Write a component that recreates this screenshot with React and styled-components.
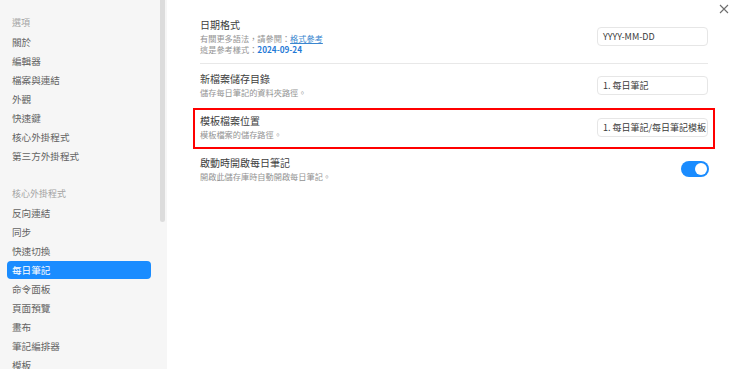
import React from "react";
import styled, { createGlobalStyle } from "styled-components";

const Global = createGlobalStyle`
  html, body { margin: 0; padding: 0; background: #fff; }
  body { font-family: "Noto Sans CJK TC", "Noto Sans", "Liberation Sans", sans-serif; }
  #root { height: 100vh; }
`;

const Shell = styled.div`
  display: flex;
  height: 100vh;
  overflow: hidden;
  position: relative;
`;

const Sidebar = styled.nav`
  position: relative;
  flex: 0 0 167px;
  background: #f6f6f6;
  padding: 12px 16px 0 7px;
  box-sizing: border-box;
  overflow: hidden;
`;

const Scrollbar = styled.div`
  position: absolute;
  left: 160px;
  top: 0;
  width: 5px;
  height: 222px;
  background: #dcdcdc;
  border-radius: 0 0 3px 3px;
`;

const Group = styled.div`
  display: flex;
  flex-direction: column;
  margin-bottom: 17px;
`;

const GroupHeader = styled.div`
  height: 21px;
  line-height: 21px;
  padding-left: 5px;
  font-size: 9px;
  color: #a4a4a4;
`;

const NavItem = styled.div`
  height: 18px;
  line-height: 18px;
  margin-bottom: 1px;
  padding-left: 5px;
  font-size: 9.6px;
  border-radius: 4px;
  color: ${(p) => (p.$active ? "#ffffff" : "#636363")};
  background: ${(p) => (p.$active ? "#1a8cff" : "transparent")};
`;

const Main = styled.main`
  flex: 1;
  padding: 10px 32px 0 33px;
  box-sizing: border-box;
`;

const Row = styled.div`
  position: relative;
  display: flex;
  align-items: center;
  justify-content: space-between;
  padding: 8px 0;
  border-top: ${(p) => (p.$divider ? "1px solid #e8e8e8" : "none")};
`;

const Marked = styled.div`
  position: absolute;
  inset: 2px -7px -1px -7px;
  border: 2px solid #ff0000;
  pointer-events: none;
`;

const Info = styled.div`
  display: flex;
  flex-direction: column;
`;

const Title = styled.div`
  font-size: 10px;
  line-height: 14px;
  color: #3d3d3d;
`;

const Desc = styled.div`
  font-size: 8.2px;
  line-height: 11px;
  color: #939393;
  margin-top: ${(p) => (p.$first ? "1px" : "0")};
`;

const Link = styled.span`
  color: #3a87d0;
  text-decoration: underline;
`;

const Sample = styled.span`
  color: #1f7ad6;
  font-weight: 700;
`;

const Input = styled.div`
  width: 111px;
  height: 19px;
  box-sizing: border-box;
  border: 1px solid #e6e6e6;
  border-radius: 4px;
  padding-left: 5px;
  font-size: 9px;
  line-height: 17px;
  color: #3a3a3a;
  white-space: nowrap;
  overflow: hidden;
  background: #fff;
`;

const Toggle = styled.div`
  position: relative;
  width: 28px;
  height: 16px;
  border-radius: 8px;
  background: #1a8cff;
  margin-right: -1px;
`;

const Knob = styled.div`
  position: absolute;
  right: 2px;
  top: 2px;
  width: 12px;
  height: 12px;
  border-radius: 50%;
  background: #fff;
`;

const Close = styled.svg`
  position: absolute;
  right: 11px;
  top: 4px;
`;

const groups = [
  {
    header: "選項",
    items: ["關於", "編輯器", "檔案與連結", "外觀", "快速鍵", "核心外掛程式", "第三方外掛程式"],
  },
  {
    header: "核心外掛程式",
    items: ["反向連結", "同步", "快速切換", "每日筆記", "命令面板", "頁面預覽", "畫布", "筆記編排器", "模板"],
  },
];

export default function App() {
  return (
    <>
      <Global />
      <Shell>
        <Sidebar>
          <Scrollbar />
          {groups.map((g) => (
            <Group key={g.header}>
              <GroupHeader>{g.header}</GroupHeader>
              {g.items.map((it) => (
                <NavItem key={it} $active={it === "每日筆記"}>
                  {it}
                </NavItem>
              ))}
            </Group>
          ))}
        </Sidebar>
        <Main>
          <Row>
            <Info>
              <Title>日期格式</Title>
              <Desc $first>
                有關更多語法，請參閱：<Link>格式參考</Link>
              </Desc>
              <Desc>
                這是參考樣式：<Sample>2024-09-24</Sample>
              </Desc>
            </Info>
            <Input>YYYY-MM-DD</Input>
          </Row>
          <Row $divider>
            <Info>
              <Title>新檔案儲存目錄</Title>
              <Desc $first>儲存每日筆記的資料夾路徑。</Desc>
            </Info>
            <Input>1. 每日筆記</Input>
          </Row>
          <Row>
            <Marked />
            <Info>
              <Title>模板檔案位置</Title>
              <Desc $first>模板檔案的儲存路徑。</Desc>
            </Info>
            <Input>1. 每日筆記/每日筆記模板</Input>
          </Row>
          <Row>
            <Info>
              <Title>啟動時開啟每日筆記</Title>
              <Desc $first>開啟此儲存庫時自動開啟每日筆記。</Desc>
            </Info>
            <Toggle>
              <Knob />
            </Toggle>
          </Row>
        </Main>
        <Close width="10" height="10" viewBox="0 0 10 10">
          <path d="M1 1 L9 9 M9 1 L1 9" stroke="#6e6e6e" strokeWidth="1.1" fill="none" />
        </Close>
      </Shell>
    </>
  );
}
